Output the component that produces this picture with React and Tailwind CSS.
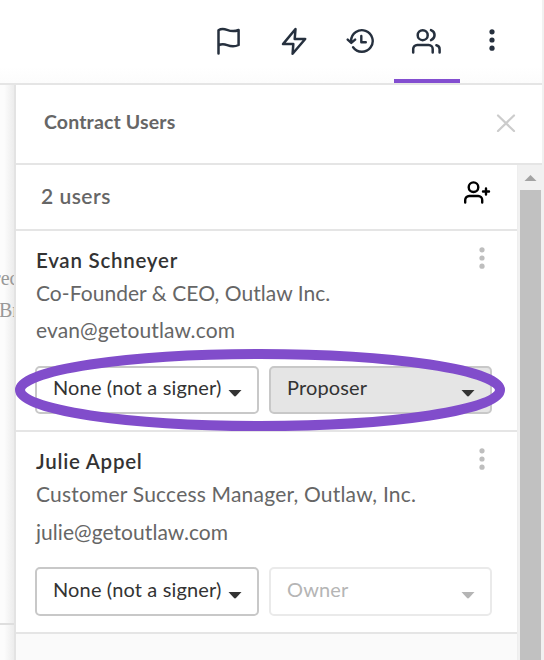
import React from 'react';

const stroke = { fill: 'none', stroke: 'currentColor', strokeLinecap: 'round', strokeLinejoin: 'round' };

function Dots({ className }) {
  return (
    <svg className={className} width="6" height="22" viewBox="0 0 6 22" fill="currentColor">
      <circle cx="3" cy="2.8" r="2.6" />
      <circle cx="3" cy="11" r="2.6" />
      <circle cx="3" cy="19.2" r="2.6" />
    </svg>
  );
}

function Toolbar() {
  return (
    <header className="flex h-[85px] w-[542px] shrink-0 justify-end border-b-2 border-[#e5e5e5] bg-linear-to-b from-white from-80% to-[#fcfcfc] pr-[16px] text-[#26303e]">
      <div className="flex w-[66px] justify-center pt-[27px] pr-[2px]">
        <svg width="26" height="30" viewBox="0 0 26 30" {...stroke} strokeWidth="2.5">
          <path d="M3.5 26.5V3.2c2-1.3 5.500-1.500 8.500-.4 4 1.600 8 1.700 11.600.2V18c-3.500 1.800-7.700 1.600-11.400.2-3.200-1.200-6.300-1.100-8.700.3" />
        </svg>
      </div>
      <div className="flex w-[66px] justify-center pt-[27px] pr-[2px]">
        <svg width="26" height="30" viewBox="0 0 26 30" {...stroke} strokeWidth="2.5">
          <path d="M14.500 2 2 17.100h10.300l-.7 9.700L24.200 12H13.700z" />
        </svg>
      </div>
      <div className="flex w-[66px] justify-center pt-[27px] pr-[2px]">
        <svg width="28" height="28" viewBox="0 0 28 28" {...stroke} strokeWidth="2.4">
          <path d="M5.100 14.800V13.500a10.800 10.800 0 1 1 2 6.800M1.700 12.600l3.600 3.300 3.800-3.300M15.300 9v6.300h4.500" />
        </svg>
      </div>
      <div className="flex w-[66px] justify-center border-b-4 border-[#834ed0] pt-[27px] pr-[2px]">
        <svg width="30" height="28" viewBox="0 0 30 28" {...stroke} strokeWidth="2.5">
          <circle cx="11.700" cy="8.200" r="5" />
          <path d="M2.200 25.400V22a4 4 0 0 1 4-4h11.500a4 4 0 0 1 4 4v3.400M20 3.100a5.300 5.300 0 0 1 0 10M25.400 18.200a4 4 0 0 1 3.200 4v3.200" />
        </svg>
      </div>
      <div className="flex w-[66px] justify-center pt-[29px] pr-[2px]">
        <Dots />
      </div>
    </header>
  );
}

function Caret() {
  return (
    <svg width="14" height="8" viewBox="0 0 14 8" fill="currentColor">
      <path d="M.5 0h13L8.200 5.800q-1.200 1.200-2.400 0z" />
    </svg>
  );
}

function Picker({ label, tone }) {
  return (
    <div className={`flex h-full items-start justify-between rounded-[5px] border-2 pl-[16px] ${tone}`}>
      <span className="leading-[24px] tracking-[0.14px]">{label}</span>
      <span className="pt-[15px] pr-[15px]"><Caret /></span>
    </div>
  );
}

function User({ name, title, email, titleClass, emailClass, children, className, pickers }) {
  return (
    <section className={`flex flex-col border-b-2 border-[#e5e5e5] bg-white pl-[20px] text-[21px] ${className}`}>
      <div className="flex h-[33px] justify-between pr-[32px]">
        <h3 className="text-[20.5px] leading-[24px] font-semibold tracking-[0.75px] text-[#333]">{name}</h3>
        <Dots className="-mt-px text-[#bebebe]" />
      </div>
      <p className={`h-[37px] leading-[24px] ${titleClass}`}>{title}</p>
      <p className={`leading-[24px] ${emailClass}`}>{email}</p>
      <div className={`-ml-px grid grid-cols-[224px_223px] gap-[10px] text-[20px] ${pickers}`}>{children}</div>
    </section>
  );
}

export default function App() {
  return (
    <div className="relative flex h-[660px] w-[544px] flex-col overflow-hidden bg-[#f1f1f1] font-['Lato',sans-serif] text-[20px] whitespace-nowrap text-[#666]">
      <Toolbar />
      <div className="flex min-h-0 flex-1">
        <div className="flex w-[16px] shrink-0 flex-col overflow-hidden border-r-2 border-[#e3e3e3] bg-linear-to-r from-[#fcfcfc] from-30% to-[#ececec] font-['Liberation_Serif',serif] text-[20px] leading-[32px] text-[#999]">
          <p className="-ml-[6px] mt-[177px]">rec</p>
          <p className="-ml-px">Br</p>
          <div className="mt-[297px] h-[2px] bg-[#dedede]" />
        </div>
        <main className="flex w-[528px] flex-col">
          <div className="flex h-[80px] w-[526px] justify-between border-b-2 border-[#e5e5e5] bg-white pt-[25px] pr-[26px] pl-[28px]">
            <h1 className="text-[19.5px] leading-[24px] font-bold tracking-[0.15px]">Contract Users</h1>
            <svg className="mt-[4px]" width="20" height="18" viewBox="0 0 20 18" {...stroke} strokeWidth="2.2">
              <path className="text-[#ccc]" stroke="currentColor" d="m2 1.500 16 15.500M18 1.500 2 17" />
            </svg>
          </div>
          <div className="flex min-h-0 flex-1">
            <div className="w-[502px] border-r border-[#eee] bg-[#fafafa]">
              <div className="flex h-[66px] justify-between border-b-2 border-[#e5e5e5] bg-white pt-[19px] pr-[26px] pl-[25px]">
                <h2 className="text-[21px] leading-[24px] font-semibold tracking-[0.5px]">2 users</h2>
                <svg className="-mt-[4px] text-black" width="28" height="26" viewBox="0 0 28 26" {...stroke} strokeWidth="2.4">
                  <circle cx="10.500" cy="7.200" r="4.800" />
                  <path d="M2.200 22.500V20a4 4 0 0 1 4-4h9a4 4 0 0 1 4 4v2.500M20 11.500h6M23 8.500v6" />
                </svg>
              </div>
              <User className="h-[201px] pt-[17px]" pickers="mt-[24px] h-[48px]" titleClass="tracking-[0.05px]" emailClass="tracking-[0.12px]" name="Evan Schneyer" title="Co-Founder & CEO, Outlaw Inc." email="evan@getoutlaw.com">
                <Picker label="None (not a signer)" tone="border-[#c8c8c8] bg-white pt-[7px] text-[#333]" />
                <Picker label="Proposer" tone="border-[#c8c8c8] bg-[#e5e5e5] pt-[7px] text-[#333]" />
              </User>
              <User className="h-[202px] pt-[17px]" pickers="mt-[24px] h-[49px]" titleClass="tracking-[0.2px]" emailClass="pt-px -mb-px tracking-[0.05px]" name="Julie Appel" title="Customer Success Manager, Outlaw, Inc." email="julie@getoutlaw.com">
                <Picker label="None (not a signer)" tone="border-[#c8c8c8] bg-white pt-[8px] text-[#333]" />
                <Picker label="Owner" tone="border-[#eaeaea] bg-white pt-[8px] text-[#b5b5b5]" />
              </User>
            </div>
            <div className="flex w-[26px] flex-col bg-[#f1f1f1] pl-[2px]">
              <svg width="21" height="25" viewBox="0 0 21 25" fill="#a3a3a3">
                <path d="m4.500 16 6-6 6 6z" />
              </svg>
              <div className="w-[21px] flex-1 bg-[#c1c1c1]" />
            </div>
          </div>
        </main>
      </div>
      <div className="absolute top-[349px] left-[15px] h-[82px] w-[490px]">
        <svg width="490" height="82" viewBox="0 0 490 82" fill="none">
          <ellipse cx="245" cy="41" rx="240" ry="36" stroke="#814dcb" strokeWidth="10" />
        </svg>
      </div>
    </div>
  );
}
